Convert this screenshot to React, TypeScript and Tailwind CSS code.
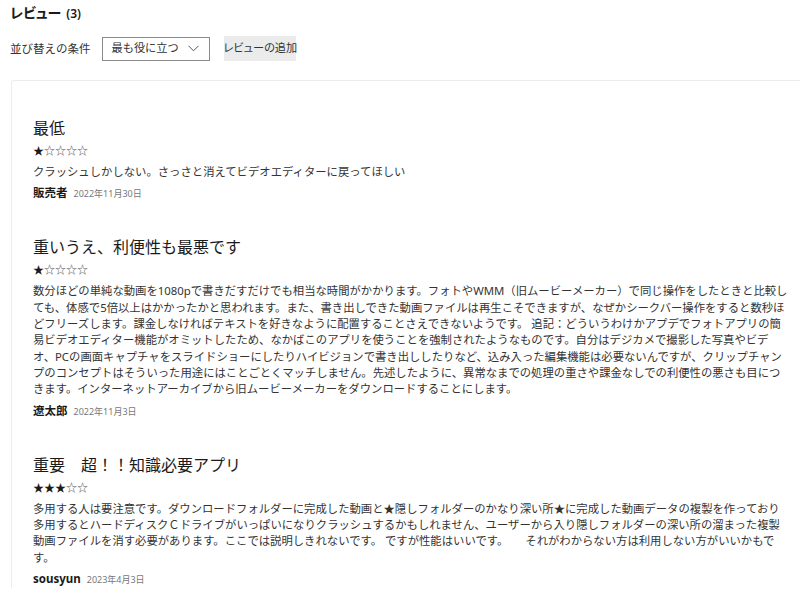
const font = { fontFamily: '"Noto Sans", "Noto Sans CJK JP", sans-serif' };

type Review = {
  title: string;
  stars: number;
  lines: string[];
  author: string;
  date: string;
};

const reviews: Review[] = [
  {
    title: "最低",
    stars: 1,
    lines: ["クラッシュしかしない。さっさと消えてビデオエディターに戻ってほしい"],
    author: "販売者",
    date: "2022年11月30日",
  },
  {
    title: "重いうえ、利便性も最悪です",
    stars: 1,
    lines: [
      "数分ほどの単純な動画を1080pで書きだすだけでも相当な時間がかかります。フォトやWMM（旧ムービーメーカー）で同じ操作をしたときと比較し",
      "ても、体感で5倍以上はかかったかと思われます。また、書き出しできた動画ファイルは再生こそできますが、なぜかシークバー操作をすると数秒ほ",
      "どフリーズします。課金しなければテキストを好きなように配置することさえできないようです。 追記：どういうわけかアプデでフォトアプリの簡",
      "易ビデオエディター機能がオミットしたため、なかばこのアプリを使うことを強制されたようなものです。自分はデジカメで撮影した写真やビデ",
      "オ、PCの画面キャプチャをスライドショーにしたりハイビジョンで書き出ししたりなど、込み入った編集機能は必要ないんですが、クリップチャン",
      "プのコンセプトはそういった用途にはことごとくマッチしません。先述したように、異常なまでの処理の重さや課金なしでの利便性の悪さも目につ",
      "きます。インターネットアーカイブから旧ムービーメーカーをダウンロードすることにします。",
    ],
    author: "遼太郎",
    date: "2022年11月3日",
  },
  {
    title: "重要　超！！知識必要アプリ",
    stars: 3,
    lines: [
      "多用する人は要注意です。ダウンロードフォルダーに完成した動画と★隠しフォルダーのかなり深い所★に完成した動画データの複製を作っており",
      "多用するとハードディスクＣドライブがいっぱいになりクラッシュするかもしれません、ユーザーから入り隠しフォルダーの深い所の溜まった複製",
      "動画ファイルを消す必要があります。ここでは説明しきれないです。 ですが性能はいいです。　　それがわからない方は利用しない方がいいかもで",
      "す。",
    ],
    author: "sousyun",
    date: "2023年4月3日",
  },
];

function Stars({ count }: { count: number }) {
  return (
    <div className="mt-[3px] flex text-[11px] leading-[16px]">
      {[0, 1, 2, 3, 4].map((i) => (
        <span key={i} className={i < count ? "text-[#1a1a1a]" : "text-[#555]"}>
          {i < count ? "★" : "☆"}
        </span>
      ))}
    </div>
  );
}

function ReviewItem({ review }: { review: Review }) {
  return (
    <div>
      <h3 className="text-[16px] leading-[24px] text-[#1a1a1a]">{review.title}</h3>
      <Stars count={review.stars} />
      <div className="mt-[5px] text-[11.35px] leading-[16.33px] text-[#333]">
        {review.lines.map((line, i) => (
          <div key={i} className="whitespace-pre">
            {line}
          </div>
        ))}
      </div>
      <div className="mt-[5px] flex items-baseline gap-[6px] leading-[16px]">
        <span className="text-[11.5px] font-bold text-[#1a1a1a]">{review.author}</span>
        <span className="text-[9px] text-[#777]">{review.date}</span>
      </div>
    </div>
  );
}

export default function App() {
  return (
    <div className="min-h-[601px] overflow-hidden bg-white" style={font}>
      <div className="px-[10px] pt-[3px]">
        <h2 className="flex items-baseline gap-[5px] leading-[20px] text-[#1a1a1a]">
          <span className="text-[14px] font-bold [font-feature-settings:'palt']">レビュー</span>
          <span className="text-[12px] font-semibold">(3)</span>
        </h2>
        <div className="mt-[12px] flex items-center">
          <span className="text-[11.5px] text-[#333]">並び替えの条件</span>
          <button className="ml-[11px] flex h-[24px] w-[108px] items-center justify-between border border-[#8a8a8a] pl-[9px] pr-[10px] text-[11.2px] text-[#333]">
            <span className="whitespace-nowrap">最も役に立つ</span>
            <svg width="11" height="7" viewBox="0 0 11 7" fill="none">
              <path d="M0.5 0.8 L5.5 5.8 L10.5 0.8" stroke="#555" strokeWidth="1" />
            </svg>
          </button>
          <button className="ml-[14px] h-[25px] w-[72px] whitespace-nowrap bg-[#ebebeb] text-[11.2px] text-[#333] [font-feature-settings:'palt']">
            レビューの追加
          </button>
        </div>
      </div>
      <div className="ml-[11px] mt-[19px] rounded-tl-[3px] border-l border-t border-[#ececec] pl-[21px] pr-[10px] pt-[35px]">
        <div className="flex flex-col gap-[33px]">
          {reviews.map((r, i) => (
            <ReviewItem key={i} review={r} />
          ))}
        </div>
      </div>
    </div>
  );
}
